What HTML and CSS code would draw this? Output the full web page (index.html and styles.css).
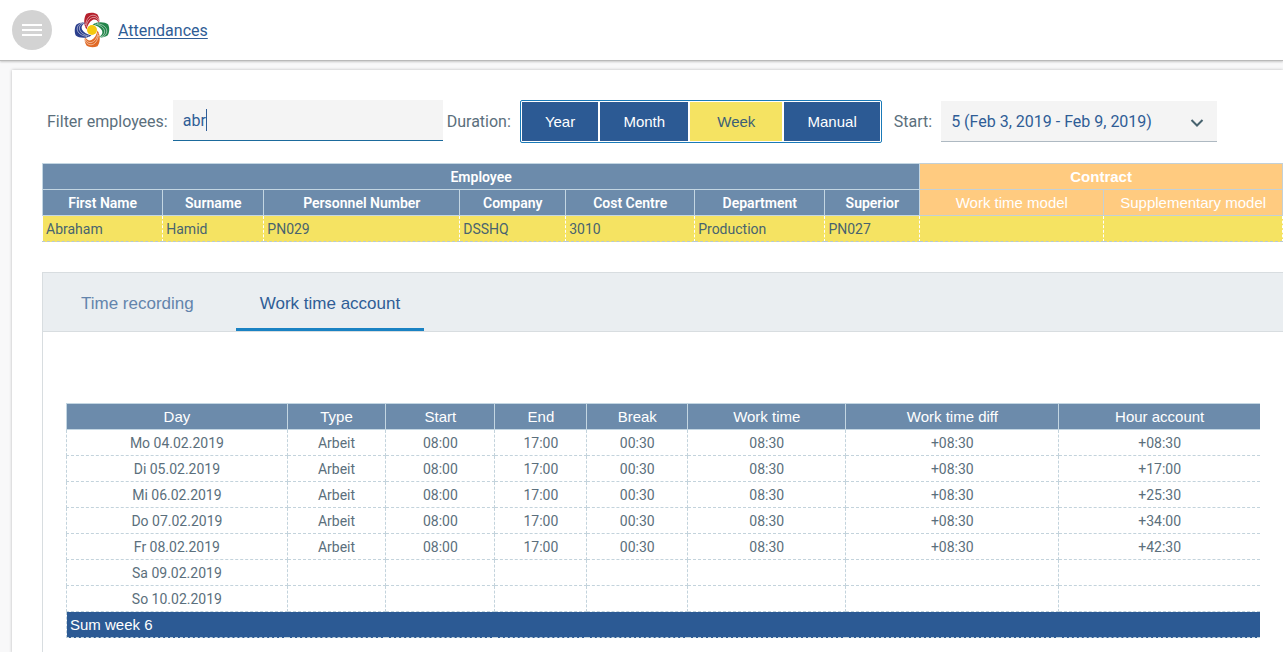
FILE: index.html
```
<!DOCTYPE html>
<html lang="en">
<head>
    <meta charset="UTF-8">
    <meta name="viewport" content="width=device-width, initial-scale=1">
    <title>Attendances</title>
    <link rel="stylesheet" href="styles.css">
</head>
<body>
    <header class="topbar">
        <button type="button" class="menu-button" aria-label="Menu">
            <svg width="20" height="14" viewBox="0 0 20 14"><path d="M0 2h20M0 7h20M0 12h20" stroke="#fff" stroke-width="2"/></svg>
        </button>
        <svg class="logo" width="34" height="34" viewBox="0 0 34 34" aria-hidden="true">
            <defs>
                <path id="petal" d="M11.500 16.500C8 11 9 4 11.500 .8C15 -.8 20 -.5 22.500 1.500C24 4 25 7 24 10C22 6.800 20 6 17.500 7C14.500 8.500 12.500 12 11.500 16.500Z"/>
                <path id="stripes" d="M10.500 12C11.500 6 14 2.500 18 2.200C21 2.200 23 4 24.200 7M11 14C12 9 14 5.500 18 4.400C21 4 23 6 24.200 9" fill="none" stroke="#fff" stroke-width=".5"/>
            </defs>
            <g><use href="#petal" fill="#b5202c"/><use href="#stripes"/></g>
            <g transform="rotate(90 17 17)"><use href="#petal" fill="#23854a"/><use href="#stripes"/></g>
            <g transform="rotate(180 17 17)"><use href="#petal" fill="#e06a26"/><use href="#stripes"/></g>
            <g transform="rotate(270 17 17)"><use href="#petal" fill="#2b3f8c"/><use href="#stripes"/></g>
            <circle cx="17" cy="17" r="5" fill="#f4c90f"/>
        </svg>
        <a href="#" class="page-link">Attendances</a>
    </header>

    <main class="card">
        <form class="filters">
            <label for="filter">Filter employees:</label>
            <div class="filter-box">
                <input type="text" id="filter" class="filter-input" value="abr">
                <span class="caret"></span>
            </div>
            <span class="duration-label" id="duration-label">Duration:</span>
            <div class="durations" role="group" aria-labelledby="duration-label">
                <button type="button">Year</button>
                <button type="button">Month</button>
                <button type="button" class="active">Week</button>
                <button type="button">Manual</button>
            </div>
            <label for="start" class="start-label">Start:</label>
            <div class="select-box">
                <select id="start">
                    <option>5 (Feb 3, 2019 - Feb 9, 2019)</option>
                </select>
                <svg class="chevron" width="14" height="10" viewBox="0 0 14 10"><path d="M1.500 2L7 7.500L12.500 2" fill="none" stroke="#48636f" stroke-width="2"/></svg>
            </div>
        </form>

        <table class="employees">
            <colgroup><col><col><col><col><col><col><col><col><col></colgroup>
            <thead>
                <tr>
                    <th colspan="7">Employee</th>
                    <th colspan="2" class="contract">Contract</th>
                </tr>
                <tr>
                    <th>First Name</th>
                    <th>Surname</th>
                    <th>Personnel Number</th>
                    <th>Company</th>
                    <th>Cost Centre</th>
                    <th>Department</th>
                    <th>Superior</th>
                    <th class="contract model">Work time model</th>
                    <th class="contract model">Supplementary model</th>
                </tr>
            </thead>
            <tbody>
                <tr>
                    <td>Abraham</td>
                    <td>Hamid</td>
                    <td>PN029</td>
                    <td>DSSHQ</td>
                    <td>3010</td>
                    <td>Production</td>
                    <td>PN027</td>
                    <td></td>
                    <td></td>
                </tr>
            </tbody>
        </table>

        <section class="panel">
            <nav class="tabs">
                <button type="button">Time recording</button>
                <button type="button" class="active">Work time account</button>
            </nav>
            <div class="panel-body">
                <table class="account">
                    <colgroup><col><col><col><col><col><col><col><col></colgroup>
                    <thead>
                        <tr><th>Day</th><th>Type</th><th>Start</th><th>End</th><th>Break</th><th>Work time</th><th>Work time diff</th><th>Hour account</th></tr>
                    </thead>
                    <tbody>
                        <tr><td>Mo 04.02.2019</td><td>Arbeit</td><td>08:00</td><td>17:00</td><td>00:30</td><td>08:30</td><td>+08:30</td><td>+08:30</td></tr>
                        <tr><td>Di 05.02.2019</td><td>Arbeit</td><td>08:00</td><td>17:00</td><td>00:30</td><td>08:30</td><td>+08:30</td><td>+17:00</td></tr>
                        <tr><td>Mi 06.02.2019</td><td>Arbeit</td><td>08:00</td><td>17:00</td><td>00:30</td><td>08:30</td><td>+08:30</td><td>+25:30</td></tr>
                        <tr><td>Do 07.02.2019</td><td>Arbeit</td><td>08:00</td><td>17:00</td><td>00:30</td><td>08:30</td><td>+08:30</td><td>+34:00</td></tr>
                        <tr><td>Fr 08.02.2019</td><td>Arbeit</td><td>08:00</td><td>17:00</td><td>00:30</td><td>08:30</td><td>+08:30</td><td>+42:30</td></tr>
                        <tr><td>Sa 09.02.2019</td><td></td><td></td><td></td><td></td><td></td><td></td><td></td></tr>
                        <tr><td>So 10.02.2019</td><td></td><td></td><td></td><td></td><td></td><td></td><td></td></tr>
                    </tbody>
                    <tfoot>
                        <tr><td colspan="8">Sum week 6</td></tr>
                    </tfoot>
                </table>
            </div>
        </section>
    </main>
</body>
</html>
```
FILE: styles.css
```
* {
    box-sizing: border-box;
}

body {
    margin: 0;
    min-height: 100vh;
    display: flex;
    flex-direction: column;
    background-color: #f8f8f9;
    color: #5b6f7c;
    font-family: Roboto, "Liberation Sans", sans-serif;
    font-size: 16px;
}

button, input, select {
    font: inherit;
    margin: 0;
    border: none;
    outline: none;
}

button {
    cursor: pointer;
}

/* Top bar */
.topbar {
    display: flex;
    align-items: center;
    height: 61px;
    padding: 0 12px;
    background-color: #fff;
    border-bottom: 1px solid #b9b9b9;
    box-shadow: 0 1px 2px rgba(0, 0, 0, 0.2);
}

.menu-button {
    display: flex;
    align-items: center;
    justify-content: center;
    width: 40px;
    height: 40px;
    padding: 0;
    border-radius: 50%;
    background-color: #d3d3d3;
}

.logo {
    margin-left: 23px;
    overflow: visible;
}

.page-link {
    margin-left: 9px;
    color: #2f5d96;
    text-underline-offset: 2px;
}

/* Content card */
.card {
    flex: 1;
    display: flex;
    flex-direction: column;
    margin: 9px 0 0 12px;
    padding: 30px 0 0 30px;
    background-color: #fff;
    box-shadow: 0 0 3px rgba(0, 0, 0, 0.25);
}

.filters {
    display: flex;
    align-items: center;
    height: 43px;
    padding-left: 5px;
    white-space: nowrap;
}

.filter-box {
    position: relative;
    width: 270px;
    margin: 0 4px 2px 5px;
}

.filter-input {
    display: block;
    width: 100%;
    height: 41px;
    padding: 0 10px;
    background-color: #f4f4f4;
    border-bottom: 1px solid #1b6a9c;
    color: #2f5d96;
    caret-color: transparent;
}

.caret {
    position: absolute;
    left: 33px;
    top: 9px;
    width: 1px;
    height: 22px;
    background-color: #2f5d96;
}

.durations {
    display: flex;
    gap: 2px;
    width: 362px;
    margin: 0 12px 0 9px;
    padding: 1px;
    border: 1px solid #1a7ab8;
    border-radius: 2px;
}

.durations button {
    flex: 1 1 auto;
    height: 39px;
    padding: 0 22px;
    background-color: #2c5a94;
    color: #fff;
    font-family: "Liberation Sans", sans-serif;
    font-size: 15px;
}

.durations .active {
    flex-basis: 90px;
    background-color: #f5e362;
    color: #3c5f77;
}

.select-box {
    position: relative;
    width: 276px;
    margin-left: 9px;
}

.select-box select {
    appearance: none;
    width: 100%;
    height: 41px;
    padding: 0 10px;
    background-color: #f4f4f4;
    border-bottom: 1px solid #aeb9c2;
    border-radius: 0;
    color: #2f5d96;
}

.chevron {
    position: absolute;
    right: 13px;
    top: 17px;
    pointer-events: none;
}

/* Tables */
table {
    width: 100%;
    table-layout: fixed;
    border-collapse: collapse;
    font-size: 14px;
}

th, td {
    height: 26px;
    padding: 0 3px;
    line-height: 20px;
    white-space: nowrap;
}

th {
    background-color: #6c8bab;
    border: 1px solid #c3d6e2;
    color: #fff;
}

td {
    border: 1px dashed #c3d3dc;
}

.employees {
    margin-top: 20px;
}

.employees col:nth-child(1) { width: 9.700%; }
.employees col:nth-child(2) { width: 8.150%; }
.employees col:nth-child(3) { width: 15.800%; }
.employees col:nth-child(4) { width: 8.550%; }
.employees col:nth-child(5) { width: 10.400%; }
.employees col:nth-child(6) { width: 10.500%; }
.employees col:nth-child(7) { width: 7.650%; }
.employees col:nth-child(8) { width: 14.850%; }

.employees th {
    font-weight: 600;
}

.employees .contract {
    background-color: #ffcb80;
    border-color: #c3d0d6;
    font-family: "Liberation Sans", sans-serif;
    font-size: 15px;
}

.employees .model {
    font-weight: normal;
}

.employees td {
    background-color: #f5e362;
    border-color: #fff;
    border-bottom-color: #b9c9d2;
    color: #48636f;
}

/* Tab panel */
.panel {
    flex: 1;
    margin-top: 30px;
    border-top: 1px solid #d8dde0;
    border-left: 1px solid #d8dde0;
}

.tabs {
    display: flex;
    height: 59px;
    padding-left: 14px;
    background-color: #eaeef1;
    border-bottom: 1px solid #d8dde0;
}

.tabs button {
    padding: 6px 24px 0;
    background: none;
    border-bottom: 3px solid transparent;
    color: #6384ac;
    font-family: "Liberation Sans", sans-serif;
    font-size: 17px;
}

.tabs button + button {
    margin-left: 18px;
}

.tabs .active {
    border-bottom-color: #1a82c3;
    color: #2f5d96;
}

.panel-body {
    padding: 71px 23px 15px;
}

.account col:nth-child(1) { width: 18.500%; }
.account col:nth-child(2) { width: 8.250%; }
.account col:nth-child(3) { width: 9.150%; }
.account col:nth-child(4) { width: 7.700%; }
.account col:nth-child(5) { width: 8.450%; }
.account col:nth-child(6) { width: 13.250%; }
.account col:nth-child(7) { width: 17.850%; }

.account th {
    font-family: "Liberation Sans", sans-serif;
    font-size: 15px;
    font-weight: normal;
}

.account td {
    text-align: center;
}

.account th:last-child,
.account td:last-child {
    border-right: none;
}

.account tfoot td {
    background-color: #2c5a94;
    color: #fff;
    font-family: "Liberation Sans", sans-serif;
    font-size: 15px;
    text-align: left;
}
```
